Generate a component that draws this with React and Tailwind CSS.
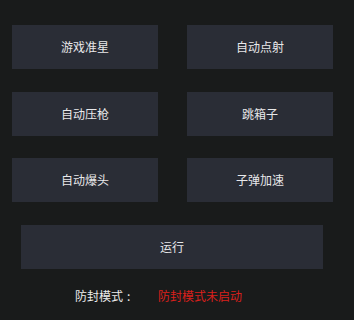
import React from "react";

const buttons = ["游戏准星", "自动点射", "自动压枪", "跳箱子", "自动爆头", "子弹加速"];

export default function App() {
  return (
    <div
      className="w-[354px] h-[320px] bg-[#191b1b] overflow-hidden"
      style={{ fontFamily: '"Noto Sans CJK SC", "Noto Sans", sans-serif' }}
    >
      {/* 功能按钮 */}
      <div className="grid grid-cols-[146px_146px] gap-x-[29px] gap-y-[22.5px] pl-[12px] pt-[25px]">
        {buttons.map((b) => (
          <button
            key={b}
            className="h-[44px] bg-[#2a2d36] text-[12px] text-[#e8e8ea] flex items-center justify-center"
          >
            {b}
          </button>
        ))}
      </div>

      {/* 运行 */}
      <div className="pl-[21px] pt-[23px]">
        <button className="w-[302px] h-[44px] bg-[#2a2d36] text-[12px] text-[#e8e8ea] flex items-center justify-center">
          运行
        </button>
      </div>

      {/* 状态 */}
      <div className="flex items-center pl-[75px] pt-[19px] text-[12px] leading-[16px]">
        <span className="text-[#ececec] w-[83px]">
          防封模式<span className="ml-[4px]">:</span>
        </span>
        <span className="text-[#d9201c]">防封模式未启动</span>
      </div>
    </div>
  );
}
